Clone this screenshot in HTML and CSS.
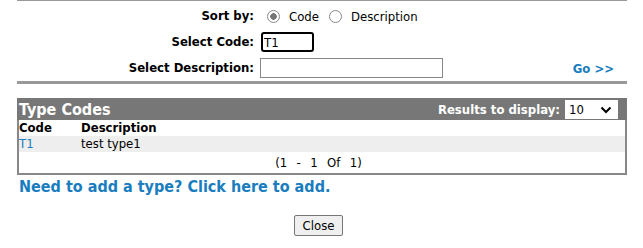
FILE: index.html
```html
<!DOCTYPE html>
<html lang="en">
<head>
    <meta charset="UTF-8">
    <title>Type Codes</title>
    <link rel="stylesheet" href="styles.css">
</head>
<body>

    <div class="page">
        <hr class="rule top">

        <div class="search">
            <div class="label">Sort by:</div>
            <div class="field">
                <label class="opt"><input type="radio" name="sort" value="code" checked> Code</label>
                <label class="opt"><input type="radio" name="sort" value="desc"> Description</label>
            </div>

            <div class="label">Select Code:</div>
            <div class="field">
                <input type="text" class="code-box focused" value="T1">
            </div>

            <div class="label">Select Description:</div>
            <div class="field split">
                <input type="text" class="desc-box">
                <a href="#" class="go">Go &gt;&gt;</a>
            </div>
        </div>

        <hr class="rule bottom">

        <div class="panel">
            <div class="panel-head">
                <span class="panel-title">Type Codes</span>
                <span class="results">Results to display:
                    <span class="pick">
                        <select>
                            <option>10</option>
                            <option>25</option>
                            <option>50</option>
                        </select>
                        <svg class="chev" width="12" height="8" viewBox="0 0 12 8"><path d="M1.5 1.5 L6 6 L10.5 1.5" fill="none" stroke="#000" stroke-width="2"/></svg>
                    </span>
                </span>
            </div>
            <table class="list">
                <tr class="cols">
                    <th class="c1">Code</th>
                    <th>Description</th>
                </tr>
                <tr class="alt">
                    <td class="c1"><a href="#">T1</a></td>
                    <td>test type1</td>
                </tr>
            </table>
            <div class="paging">(1&nbsp; - &nbsp;1&nbsp; Of &nbsp;1)</div>
        </div>

        <a href="#" class="add">Need to add a type? Click here to add.</a>

        <div class="actions">
            <button type="button">Close</button>
        </div>
    </div>

</body>
</html>
```

FILE: styles.css
```css
body {
    margin: 0;
    font-family: "DejaVu Sans Condensed", "DejaVu Sans", sans-serif;
    font-size: 13px;
    color: #000;
    background: #fff;
}
.page {
    width: 610px;
    margin-left: 17px;
}
.rule {
    border: 0;
    margin: 0;
    background: #999;
}
.rule.top {
    height: 2px;
    margin-top: -1px;
}
.rule.bottom {
    height: 3px;
}
.search {
    display: grid;
    grid-template-columns: 237px 1fr;
    column-gap: 6px;
    padding: 2px 0 0;
}
.label {
    text-align: right;
    font-weight: bold;
    height: 26px;
    line-height: 26px;
}
.field {
    display: flex;
    align-items: center;
    height: 26px;
}
.split {
    justify-content: space-between;
}
.opt {
    display: flex;
    align-items: center;
    margin-right: 10px;
}
.opt input {
    appearance: none;
    width: 13px;
    height: 13px;
    margin: 0 9px 0 7px;
    border: 1px solid #888;
    border-radius: 50%;
    background: #fff;
}
.opt input:checked {
    background: radial-gradient(circle, #777 0 3px, #fff 3.5px);
}
.opt:last-child input {
    margin-left: 0;
}
input[type="text"] {
    font-family: inherit;
    font-size: 13px;
    height: 20px;
    box-sizing: border-box;
    border: 1px solid #888;
    padding: 0 2px;
    margin: 0;
}
.code-box {
    width: 53px;
    margin-left: 1px !important;
}
.focused {
    border: 2px solid #000 !important;
    border-radius: 3px;
    padding: 0 1px !important;
}
.desc-box {
    width: 183px;
}
.go {
    color: #1a7dc0;
    font-weight: bold;
    text-decoration: none;
    margin-right: 13px;
}
.panel {
    margin-top: 14px;
    border: 2px solid #888;
    border-top: 0;
}
.panel-head {
    background: #777;
    color: #fff;
    display: flex;
    justify-content: space-between;
    align-items: center;
    height: 22px;
    margin: 0 -2px;
    padding: 0 9px 0 2px;
}
.panel-title {
    font-weight: bold;
    font-size: 16px;
}
.results {
    font-weight: bold;
    display: flex;
    align-items: center;
    gap: 5px;
}
.pick {
    position: relative;
    display: inline-block;
}
.pick select {
    display: block;
    appearance: none;
    width: 53px;
    height: 19px;
    border: 0;
    background: #fff;
    font-family: inherit;
    font-size: 13px;
    padding: 0 0 0 4px;
    color: #000;
}
.chev {
    position: absolute;
    right: 6px;
    top: 6px;
    pointer-events: none;
}
.list {
    width: 100%;
    border-collapse: collapse;
}
.list th, .list td {
    text-align: left;
    padding: 0;
    height: 16px;
    line-height: 16px;
}
.list .c1 {
    width: 62px;
}
.list tr.alt td {
    background: #eee;
}
.list a {
    color: #1a7dc0;
    text-decoration: none;
}
.paging {
    text-align: center;
    height: 21px;
    line-height: 22px;
    padding-right: 7px;
    word-spacing: 1px;
}
.add {
    display: block;
    color: #1a7dc0;
    font-weight: bold;
    font-size: 16px;
    line-height: 20px;
    text-decoration: none;
    margin: 2px 0 0 2px;
}
.actions {
    text-align: center;
    margin-top: 18px;
    padding-right: 7px;
}
.actions button {
    font-family: inherit;
    font-size: 13px;
    height: 21px;
    padding: 0 8px;
    background: #efefef;
    border: 1px solid #767676;
    border-radius: 2px;
}
```
